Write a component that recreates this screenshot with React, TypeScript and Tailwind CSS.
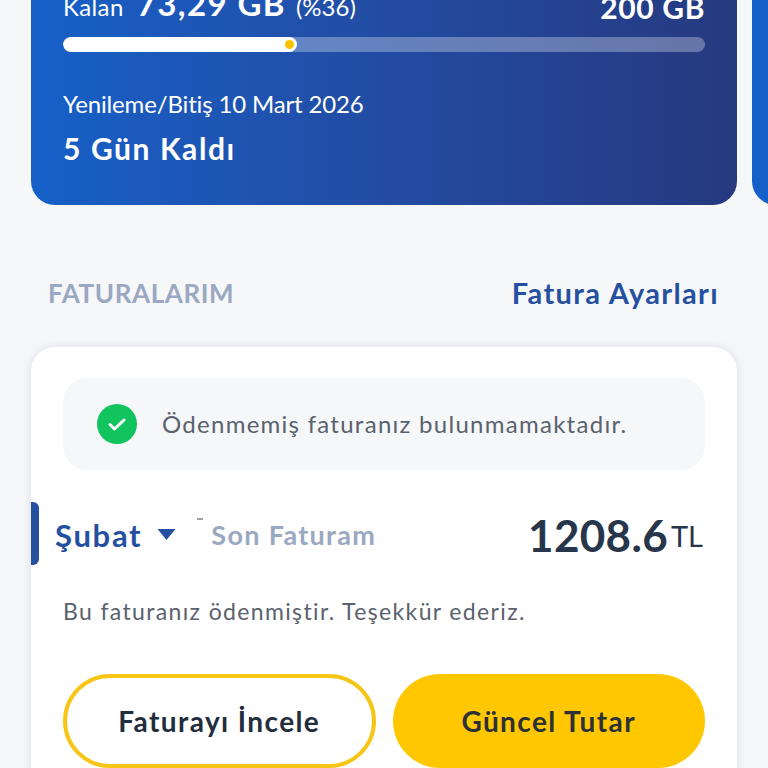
const font = "font-['Lato','Noto_Sans',sans-serif]";

function UsageCard() {
  return (
    <div className="w-[706px] h-[225px] shrink-0 rounded-b-[24px] bg-gradient-to-r from-[#1560c8] to-[#26397f] px-8 text-white">
      <div className="flex justify-between items-baseline h-[57px] pt-[7px] leading-none">
        <div className="flex items-baseline">
          <span className="text-[24px] tracking-[0.4px]">Kalan</span>
          <span className="ml-[13px] text-[33px] font-bold tracking-[1.4px]">73,29 GB</span>
          <span className="ml-[10px] text-[24px]">(%36)</span>
        </div>
        <span className="text-[30px] font-bold tracking-[0.6px] relative top-[3px]">200 GB</span>
      </div>
      <div className="h-[15px] rounded-full bg-white/30 overflow-hidden">
        <div className="relative h-full w-[36.5%] rounded-full bg-white">
          <span className="absolute right-[3px] top-[3px] w-[9px] h-[9px] rounded-full bg-[#f8c400]" />
        </div>
      </div>
      <p className="mt-[36px] text-[24px] leading-8 tracking-[-0.15px]">Yenileme/Bitiş 10 Mart 2026</p>
      <p className="mt-[12px] text-[30px] leading-8 font-bold tracking-[1.6px]">5 Gün Kaldı</p>
    </div>
  );
}

export default function App() {
  return (
    <div className={`h-[768px] overflow-hidden bg-[#f5f7f9] ${font}`}>
      <div className="flex gap-[15px] pl-[31px] -mt-5">
        <UsageCard />
        <div className="w-[706px] h-[225px] shrink-0 rounded-bl-[24px] bg-[#1560c8]" />
      </div>

      <div className="flex items-center justify-between pl-[48px] pr-[49px] mt-[72px] h-8">
        <span className="text-[26px] font-bold tracking-[0.6px] text-[#9ba8c2]">FATURALARIM</span>
        <span className="text-[29px] font-bold tracking-[1.35px] text-[#24509f]">Fatura Ayarları</span>
      </div>

      <div className="relative mx-[31px] mt-[38px] h-[460px] rounded-[24px] bg-white px-8 pt-[31px] shadow-[0_0_10px_rgba(40,50,80,0.12)]">
        <div className="flex items-center h-[92px] rounded-[24px] bg-[#f5f7f9] pl-[34px]">
          <span className="flex items-center justify-center w-10 h-10 rounded-full bg-[#12c45e]">
            <svg viewBox="0 0 24 24" className="w-6 h-6" fill="none" stroke="white" strokeWidth="3" strokeLinecap="round" strokeLinejoin="round">
              <path d="M5 12.5l4.5 4.5L19 8" />
            </svg>
          </span>
          <span className="ml-[25px] text-[24px] tracking-[1.27px] text-[#5a626d]">Ödenmemiş faturanız bulunmamaktadır.</span>
        </div>

        <span className="absolute left-0 top-[155px] w-2 h-[63px] rounded-r-md bg-[#24509f]" />
        <span className="absolute left-[166px] top-[171px] w-[6px] h-[2px] bg-[#9aa0aa]" />

        <div className="flex items-center justify-between h-[63px] mt-8 -ml-2 pt-[3px] pr-[2px]">
          <div className="flex items-center">
            <span className="text-[31px] font-bold tracking-[1.7px] text-[#24509f]">Şubat</span>
            <svg viewBox="0 0 18 12" className="ml-[15px] w-[19px] h-3" fill="#24509f">
              <path d="M0 0h18L9 11z" />
            </svg>
            <span className="ml-[35px] text-[27px] font-bold tracking-[1.3px] text-[#9ba8c2]">Son Faturam</span>
          </div>
          <div className="flex items-baseline text-[#27364a]">
            <span className="text-[44px] font-bold tracking-[0.3px]">1208.6</span>
            <span className="ml-[3px] text-[29px] relative -top-[5px]">TL</span>
          </div>
        </div>

        <p className="mt-[30px] h-8 text-[23px] leading-8 tracking-[1.36px] text-[#5a626d]">Bu faturanız ödenmiştir. Teşekkür ederiz.</p>

        <div className="grid grid-cols-2 gap-[17px] mt-[47px]">
          <button className="h-[94px] rounded-full border-4 border-[#f6c516] text-[28px] font-bold tracking-[1.4px] text-[#222d3d]">
            Faturayı İncele
          </button>
          <button className="h-[94px] rounded-full bg-[#fec700] text-[28px] font-bold tracking-[1.4px] text-[#2c3138]">
            Güncel Tutar
          </button>
        </div>
      </div>
    </div>
  );
}
